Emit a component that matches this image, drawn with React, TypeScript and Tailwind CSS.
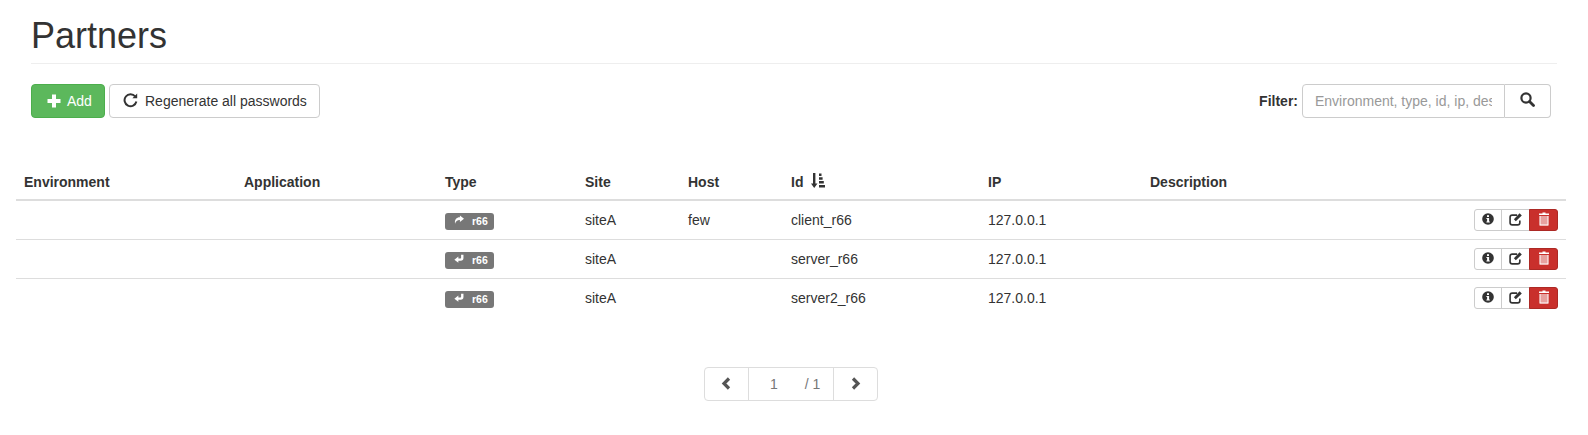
import React from 'react';

interface Partner {
  direction: 'out' | 'in';
  site: string;
  host: string;
  id: string;
  ip: string;
}

const partners: Partner[] = [
  { direction: 'out', site: 'siteA', host: 'few', id: 'client_r66', ip: '127.0.0.1' },
  { direction: 'in', site: 'siteA', host: '', id: 'server_r66', ip: '127.0.0.1' },
  { direction: 'in', site: 'siteA', host: '', id: 'server2_r66', ip: '127.0.0.1' },
];

function PlusIcon() {
  return (
    <svg className="w-[14px] h-[14px]" viewBox="0 0 14 14" fill="currentColor">
      <path d="M5 0.500h4v4.500h4.500v4H9v4.500H5V9H0.500V5H5z" />
    </svg>
  );
}

function RefreshIcon() {
  return (
    <svg className="w-[15px] h-[15px] -mt-[2px]" viewBox="0 0 15 15" fill="none" stroke="currentColor">
      <path d="M12.200 3.400A6 6 0 1 0 13.400 8.600" strokeWidth="2" />
      <path d="M9.400 5.300h4.800V0.500z" fill="currentColor" stroke="none" />
    </svg>
  );
}

function SearchIcon() {
  return (
    <svg className="w-[15px] h-[15px] -mt-[3px]" viewBox="0 0 15 15" fill="none" stroke="currentColor">
      <circle cx="6" cy="6" r="4.600" strokeWidth="2.200" />
      <path d="M9.500 9.500l4 4" strokeWidth="2.800" strokeLinecap="round" />
    </svg>
  );
}

function SortIcon() {
  return (
    <svg className="w-[14px] h-[15px] -mt-[4px]" viewBox="0 0 14 15" fill="currentColor">
      <path d="M2 0h2.400v10.500h2.100L3.200 15 0 10.500h2z" />
      <path d="M8 0.500h2.500v2.500H8zM8 4.300h3.600v2.500H8zM8 8.100h4.800v2.500H8zM8 11.900h6v2.600H8z" />
    </svg>
  );
}

function ShareIcon() {
  return (
    <svg className="w-[10px] h-[10px]" viewBox="0 0 11 11" fill="currentColor">
      <path d="M6.500 0.500L11 4.200 6.500 7.800V5.600C4 5.400 2 6.600 1.200 9.600 0.300 5.600 2.600 2.600 6.500 2.600z" />
    </svg>
  );
}

function EnterIcon() {
  return (
    <svg className="w-[10px] h-[10px]" viewBox="0 0 11 11" fill="currentColor">
      <path d="M7.800 0.800h2.600v3.600c0 2-1 3-3 3H4.800v2.200L0.400 6.200 4.800 2.800v2.200h2.200c0.600 0 0.800-0.200 0.800-0.800z" />
    </svg>
  );
}

function InfoIcon() {
  return (
    <svg className="w-3 h-3 -mt-[2px]" viewBox="0 0 12 12">
      <circle cx="6" cy="6" r="5.800" fill="#333333" />
      <rect x="5" y="2.200" width="2" height="1.800" fill="#ffffff" />
      <path d="M4.400 5h2.700v3.400h0.700v1H4.400v-1h0.700V6H4.400z" fill="#ffffff" />
    </svg>
  );
}

function EditIcon() {
  return (
    <svg className="w-[13px] h-[13px] -mt-[2px]" viewBox="0 0 12 12" fill="none" stroke="#333333">
      <path d="M7.500 2H3a2 2 0 0 0-2 2v5a2 2 0 0 0 2 2h5a2 2 0 0 0 2-2V7" strokeWidth="1.500" />
      <path d="M4.500 5.800l1.800 1.800L11.800 2.200 9.800 0.300z" fill="#333333" stroke="none" />
    </svg>
  );
}

function TrashIcon() {
  return (
    <svg className="w-3 h-[14px] -mt-[2px]" viewBox="0 0 12 14" fill="#ffffff">
      <path d="M4.500 0.500h3v1h3.500v1.600H1V1.500h3.500z" />
      <path d="M1.800 4h8.400v9.500H1.800z" fillOpacity="0.55" />
      <path d="M1.500 4h1v9.500h-1zM9.500 4h1v9.500h-1zM1.500 12.500h9v1h-9z" />
    </svg>
  );
}

function TypeBadge({ direction }: { direction: 'out' | 'in' }) {
  return (
    <span className="flex items-center h-[17px] w-[49px] mt-[3px] rounded-[3px] bg-[#777777] text-white text-[10.500px] font-bold leading-none pl-[9px]">
      <span className="-mt-[3px]">{direction === 'out' ? <ShareIcon /> : <EnterIcon />}</span>
      <span className="ml-[8px]">r66</span>
    </span>
  );
}

function ChevronLeft() {
  return (
    <svg className="w-[10px] h-[13px] -ml-[2px]" viewBox="0 0 10 13" fill="none" stroke="#555555">
      <path d="M8 1.500L3 6.500l5 5" strokeWidth="3.200" />
    </svg>
  );
}

function ChevronRight() {
  return (
    <svg className="w-[10px] h-[13px]" viewBox="0 0 10 13" fill="none" stroke="#555555">
      <path d="M2 1.500l5 5-5 5" strokeWidth="3.200" />
    </svg>
  );
}

export default function App() {
  return (
    <div className="w-[1588px] h-[435px] bg-white text-[#333333] text-sm font-['Liberation_Sans',Arial,sans-serif] px-4 overflow-hidden">
      <div className="ml-[15px] mr-[21px]">
        <h1 className="text-[36px] leading-[40px] font-normal pt-[16px] pb-[7px] border-b border-[#eeeeee] -mr-[6px]">Partners</h1>

        <div className="flex items-center justify-between mt-5">
          <div className="flex items-center gap-1">
            <button className="flex items-center h-[34px] w-[74px] pl-[15px] rounded bg-[#5cb85c] border border-[#4cae4c] text-white">
              <PlusIcon />
              <span className="ml-[6px]">Add</span>
            </button>
            <button className="flex items-center h-[34px] w-[211px] pl-[13px] rounded bg-white border border-[#cccccc]">
              <RefreshIcon />
              <span className="ml-[7px]">Regenerate all passwords</span>
            </button>
          </div>
          <div className="flex items-center">
            <label className="font-bold mr-1">Filter:</label>
            <div className="flex h-[34px]">
              <input
                readOnly
                placeholder="Environment, type, id, ip, description"
                className="w-[203px] h-full px-3 rounded-l bg-white border border-[#cccccc] text-sm outline-none placeholder:text-[#999999]"
              />
              <button className="w-[46px] h-full flex items-center justify-center rounded-r bg-white border border-l-0 border-[#cccccc]">
                <SearchIcon />
              </button>
            </div>
          </div>
        </div>
      </div>

      <table className="w-[1550px] mt-[46px] table-fixed border-collapse">
        <colgroup>
          <col className="w-[220px]" />
          <col className="w-[201px]" />
          <col className="w-[140px]" />
          <col className="w-[103px]" />
          <col className="w-[103px]" />
          <col className="w-[197px]" />
          <col className="w-[162px]" />
          <col className="w-[282px]" />
          <col className="w-[142px]" />
        </colgroup>
        <thead>
          <tr className="border-b-2 border-[#dddddd] text-left">
            <th className="px-2 pt-2 pb-[7px] h-[36px] font-bold">Environment</th>
            <th className="px-2 pt-2 pb-[7px] font-bold">Application</th>
            <th className="px-2 pt-2 pb-[7px] font-bold">Type</th>
            <th className="px-2 pt-2 pb-[7px] font-bold">Site</th>
            <th className="px-2 pt-2 pb-[7px] font-bold">Host</th>
            <th className="px-2 pt-2 pb-[7px] font-bold">
              <span className="flex items-center gap-2">
                Id
                <SortIcon />
              </span>
            </th>
            <th className="px-2 pt-2 pb-[7px] font-bold">IP</th>
            <th className="px-2 pt-2 pb-[7px] font-bold">Description</th>
            <th className="px-2 pt-2 pb-[7px]" />
          </tr>
        </thead>
        <tbody>
          {partners.map((partner) => (
            <tr key={partner.id} className="border-b border-[#dddddd] last:border-b-0 align-top">
              <td className="p-2 h-[39px]" />
              <td className="p-2" />
              <td className="px-2 pt-[9px] pb-[7px] leading-[20px]">
                <TypeBadge direction={partner.direction} />
              </td>
              <td className="px-2 pt-[9px] pb-[7px] leading-[20px]">{partner.site}</td>
              <td className="px-2 pt-[9px] pb-[7px] leading-[20px]">{partner.host}</td>
              <td className="px-2 pt-[9px] pb-[7px] leading-[20px]">{partner.id}</td>
              <td className="px-2 pt-[9px] pb-[7px] leading-[20px]">{partner.ip}</td>
              <td className="p-2" />
              <td className="px-2 pt-[8px] pb-2">
                <div className="flex justify-end h-[22px]">
                  <button className="w-[28px] flex items-center justify-center rounded-l-[3px] border border-[#cccccc] bg-white">
                    <InfoIcon />
                  </button>
                  <button className="w-[29px] -ml-px flex items-center justify-center border border-[#cccccc] bg-white">
                    <EditIcon />
                  </button>
                  <button className="w-[29px] -ml-px flex items-center justify-center rounded-r-[3px] border border-[#ac2925] bg-[#c9302c]">
                    <TrashIcon />
                  </button>
                </div>
              </td>
            </tr>
          ))}
        </tbody>
      </table>

      <div className="flex justify-center mt-[49px] pr-[6px]">
        <div className="flex h-[34px] w-[174px] rounded border border-[#dddddd] text-[#777777]">
          <div className="w-[44px] flex items-center justify-center border-r border-[#dddddd]">
            <ChevronLeft />
          </div>
          <div className="flex-1 flex items-center pl-[21px]">
            <span>1</span>
            <span className="ml-[27px]">/ 1</span>
          </div>
          <div className="w-[44px] flex items-center justify-center border-l border-[#dddddd]">
            <ChevronRight />
          </div>
        </div>
      </div>
    </div>
  );
}
